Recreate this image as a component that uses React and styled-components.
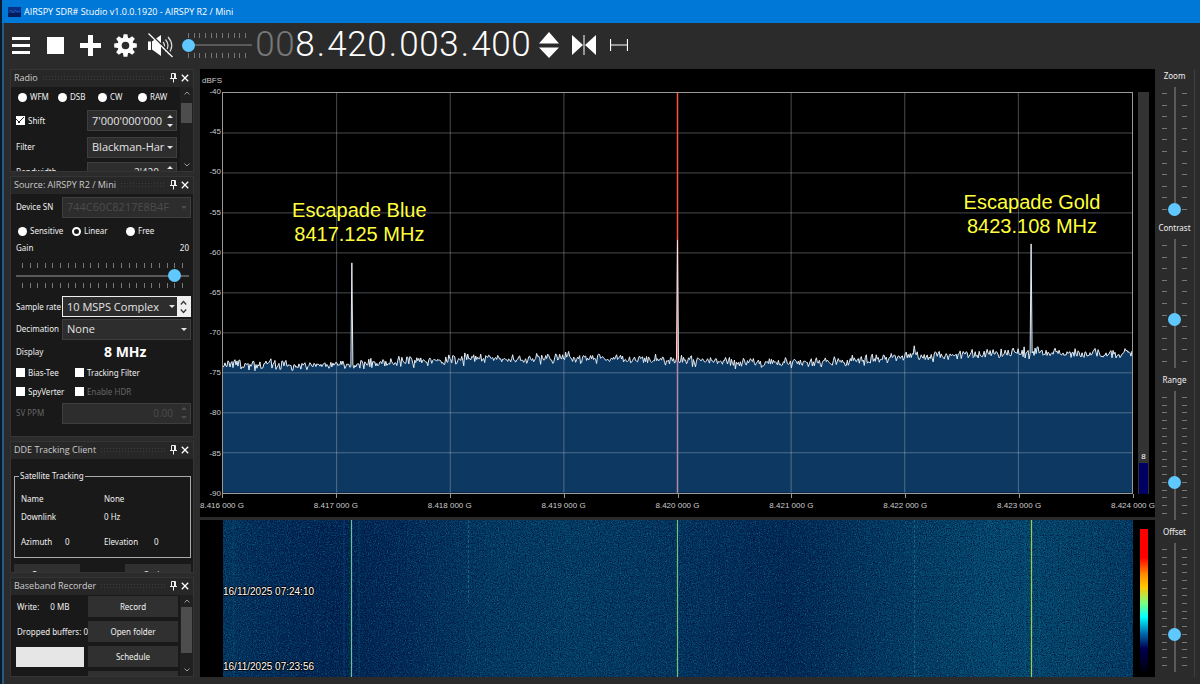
import React from 'react'
import styled, { createGlobalStyle, css } from 'styled-components'

const DIGITS = '008.420.003.400'.split('')
const LEVELS = [-40, -45, -50, -55, -60, -65, -70, -75, -80, -85, -90]
const FREQS = [
    '8.416 000 G', '8.417 000 G', '8.418 000 G', '8.419 000 G', '8.420 000 G',
    '8.421 000 G', '8.422 000 G', '8.423 000 G', '8.424 000 G',
]
const PLOT_W = 910
const PLOT_H = 400
// noise floor as [x, y] in plot units
const FLOOR = [
    [0, 271], [78, 273], [128, 272], [198, 268], [278, 265], [338, 265], [418, 267],
    [498, 269], [558, 270], [628, 268], [688, 263], [778, 260], [818, 260], [910, 262],
]
const PEAKS = { 129: 170, 455: 147, 809: 151, 692: 253, 802: 254, 816: 254 }

function random(seed) {
    let s = seed
    return () => {
        s = (s * 1103515245 + 12345) % 2147483648
        return s / 2147483648
    }
}

function floorAt(x) {
    const i = Math.max(1, FLOOR.findIndex(([fx]) => fx >= x))
    const [x0, y0] = FLOOR[i - 1]
    const [x1, y1] = FLOOR[i]
    return y0 + ((y1 - y0) * (x - x0)) / (x1 - x0)
}

function makeTrace() {
    const rnd = random(77)
    const points = []
    for (let x = 0; x <= PLOT_W; x += 1) {
        const noise = (rnd() + rnd() + rnd() - 1.5) * 5
        points.push(`${x},${(PEAKS[x] || floorAt(x) + noise).toFixed(1)}`)
    }
    return points.join(' ')
}
const TRACE = makeTrace()

function Ticks({ count, vertical }) {
    return (
        <TickRow $vertical={vertical} aria-hidden="true">
            {Array.from({ length: count }, (_, i) => <Tick key={i} $vertical={vertical} />)}
        </TickRow>
    )
}

function Slider({ label, count, vertical, ...rest }) {
    return (
        <SliderBox $vertical={vertical}>
            <Ticks count={count} vertical={vertical} />
            <Range type="range" aria-label={label} $vertical={vertical} {...rest} />
            <Ticks count={count} vertical={vertical} />
        </SliderBox>
    )
}

function Panel({ title, children }) {
    return (
        <PanelBox>
            <PanelHead>
                <h2>{title}</h2>
                <Grip />
                <HeadButton aria-label="Pin">
                    <svg width="7" height="10" viewBox="0 0 7 10">
                        <path d="M1.5 .5h4v5h-4zM0 5.5h7M3.5 5.5v4" fill="none" stroke="#eee" />
                        <path d="M4 1h1.5v4H4z" fill="#eee" />
                    </svg>
                </HeadButton>
                <HeadButton aria-label="Close">
                    <svg width="8" height="8" viewBox="0 0 8 8">
                        <path d="M.8.8l6.4 6.4M7.2.8L.8 7.2" stroke="#fff" strokeWidth="1.3" />
                    </svg>
                </HeadButton>
            </PanelHead>
            <PanelBody>{children}</PanelBody>
        </PanelBox>
    )
}

function Option({ type = 'checkbox', name, label, width, checked, disabled }) {
    return (
        <OptionLabel $width={width} $off={disabled}>
            <Mark type={type} name={name} defaultChecked={checked} disabled={disabled} />
            {label}
        </OptionLabel>
    )
}

function Combo({ id, value, raised, disabled }) {
    return (
        <Field $raised={raised} $off={disabled}>
            <select id={id} defaultValue={value} disabled={disabled}>
                <option>{value}</option>
            </select>
            <svg width="6" height="3" viewBox="0 0 6 3"><path d="M0 0h6L3 3z" fill="currentColor" /></svg>
            {raised && (
                <Stepper aria-label="Refresh">
                    <svg width="7" height="14" viewBox="0 0 7 14">
                        <path d="M.8 4.5l2.7-3 2.7 3M.8 9.5l2.7 3 2.7-3" fill="none" stroke="#333" strokeWidth="1.2" />
                    </svg>
                </Stepper>
            )}
        </Field>
    )
}

function Spin({ id, label, value, disabled }) {
    return (
        <Field $off={disabled}>
            <input id={id} aria-label={label} defaultValue={value} disabled={disabled} />
            <svg width="6" height="12" viewBox="0 0 6 12">
                <path d="M0 3h6L3 0zM0 9h6l-3 3z" fill="currentColor" />
            </svg>
        </Field>
    )
}

function ScrollBar({ top, size }) {
    return (
        <ScrollTrack aria-hidden="true">
            <svg width="6" height="4" viewBox="0 0 6 4"><path d="M.5 3.5L3 1l2.5 2.5" fill="none" stroke="#999" /></svg>
            <ScrollThumb style={{ marginTop: top, height: size }} />
            <svg width="6" height="4" viewBox="0 0 6 4"><path d="M.5.5L3 3 5.5.5" fill="none" stroke="#999" /></svg>
        </ScrollTrack>
    )
}

function TopBar() {
    return (
        <ToolBar>
            <Tool aria-label="Menu">
                <svg width="18" height="17" viewBox="0 0 18 17"><path d="M0 0h18v3H0zM0 7h18v3H0zM0 14h18v3H0z" fill="#fff" /></svg>
            </Tool>
            <Tool aria-label="Stop">
                <svg width="17" height="17" viewBox="0 0 17 17"><path d="M0 0h17v17H0z" fill="#fff" /></svg>
            </Tool>
            <Tool aria-label="Add">
                <svg width="21" height="21" viewBox="0 0 21 21"><path d="M8 0h5v8h8v5h-8v8H8v-8H0V8h8z" fill="#fff" /></svg>
            </Tool>
            <Tool aria-label="Settings">
                <svg width="23" height="23" viewBox="-11.5 -11.5 23 23">
                    {[0, 45, 90, 135].map((a) => (
                        <path key={a} d="M-2.8 -6L-1.9 -11.3H1.9L2.8 -6V6L1.9 11.3H-1.9L-2.8 6z" fill="#fff" transform={`rotate(${a})`} />
                    ))}
                    <circle r="8" fill="#fff" />
                    <circle r="3.8" fill="#2b2b2b" />
                </svg>
            </Tool>
            <Tool aria-label="Mute">
                <svg width="25" height="25" viewBox="0 0 25 25">
                    <path d="M0 8.5h3v8.5H0zM4 8.5L13 2v21l-9-6.5z" fill="#fff" />
                    <path d="M15 9q3 3.5 0 7M17.5 6.5q5 6 0 12M20 4q7.5 8.5 0 17" fill="none" stroke="#ddd" strokeWidth="1.2" />
                    <path d="M1 0l24 23" stroke="#2b2b2b" strokeWidth="2" />
                    <path d="M.5 .5L24.5 24" stroke="#fff" strokeWidth="1.2" />
                </svg>
            </Tool>
            <VolumeBox>
                <Slider label="Volume" count={11} min="0" max="100" defaultValue="0" />
            </VolumeBox>
            <Frequency aria-label="Frequency">
                {DIGITS.map((d, i) => <Digit key={i} $dot={d === '.'} $dim={i < 2}>{d}</Digit>)}
            </Frequency>
            <Tool aria-label="Tuning step">
                <svg width="20" height="26" viewBox="0 0 20 26"><path d="M0 11.5L10 0l10 11.5zM0 15.5L10 26l10-10.5z" fill="#fff" /></svg>
            </Tool>
            <Tool aria-label="Center">
                <svg width="24" height="22" viewBox="0 0 24 22">
                    <path d="M0 1l11 10L0 21zM24 1L13 11l11 10z" fill="#fff" />
                    <path d="M12 1v20" stroke="#ddd" strokeWidth="1.2" />
                </svg>
            </Tool>
            <Tool aria-label="Span">
                <svg width="18" height="12" viewBox="0 0 18 12"><path d="M.5 0v12M17.5 0v12M0 6h18" stroke="#fff" strokeWidth="1.2" /></svg>
            </Tool>
        </ToolBar>
    )
}

function RadioPanel() {
    return (
        <Panel title="Radio">
            <Scroller>
                <Row $h={20}>
                    {['WFM', 'DSB', 'CW', 'RAW'].map((m) => (
                        <Option key={m} type="radio" name="mode" label={m} width={40} />
                    ))}
                </Row>
                <FormRow $h={27}>
                    <Option label="Shift" checked />
                    <Spin label="Shift frequency" value="7'000'000'000" />
                </FormRow>
                <FormRow $h={26}>
                    <label htmlFor="filter">Filter</label>
                    <Combo id="filter" value="Blackman-Harris 4" />
                </FormRow>
                <FormRow $h={24}>
                    <label htmlFor="bandwidth">Bandwidth</label>
                    <RightText><Spin id="bandwidth" value="2'420" /></RightText>
                </FormRow>
            </Scroller>
            <ScrollBar top={8} size={20} />
        </Panel>
    )
}

function SourcePanel() {
    return (
        <Panel title="Source: AIRSPY R2 / Mini">
            <Stack>
                <SourceRow $h={26}>
                    <label htmlFor="serial">Device SN</label>
                    <Combo id="serial" value="744C60C8217E8B4F" disabled />
                </SourceRow>
                <Row $h={22}>
                    <Option type="radio" name="gain" label="Sensitive" width={54} />
                    <Option type="radio" name="gain" label="Linear" width={54} checked />
                    <Option type="radio" name="gain" label="Free" width={54} />
                </Row>
                <Spread>
                    <span>Gain</span>
                    <output>20</output>
                </Spread>
                <GainBox>
                    <Slider label="Gain" count={22} min="0" max="21" defaultValue="20" />
                </GainBox>
                <SourceRow $h={23}>
                    <label htmlFor="rate">Sample rate</label>
                    <Combo id="rate" value="10 MSPS Complex" raised />
                </SourceRow>
                <SourceRow $h={22}>
                    <label htmlFor="decimation">Decimation</label>
                    <Combo id="decimation" value="None" />
                </SourceRow>
                <FormRow $h={23}>
                    <span>Display</span>
                    <Big>8 MHz</Big>
                </FormRow>
                <Row $h={19}>
                    <Option label="Bias-Tee" width={59} />
                    <Option label="Tracking Filter" width={80} />
                </Row>
                <Row $h={19}>
                    <Option label="SpyVerter" width={59} />
                    <Option label="Enable HDR" width={80} disabled />
                </Row>
                <SourceRow $h={24} $off>
                    <label htmlFor="ppm">SV PPM</label>
                    <RightText><Spin id="ppm" value="0.00" disabled /></RightText>
                </SourceRow>
            </Stack>
        </Panel>
    )
}

function TrackingPanel() {
    return (
        <Panel title="DDE Tracking Client">
            <TrackingBody>
                <Group>
                    <legend>Satellite Tracking</legend>
                    <Pairs>
                        <dt>Name</dt><dd>None</dd>
                        <dt>Downlink</dt><dd>0 Hz</dd>
                    </Pairs>
                    <Angles>
                        <span>Azimuth</span><span>0</span>
                        <span>Elevation</span><span>0</span>
                    </Angles>
                </Group>
                <ButtonPair>
                    <PushButton>Connect</PushButton>
                    <PushButton>Options</PushButton>
                </ButtonPair>
            </TrackingBody>
        </Panel>
    )
}

function RecorderPanel() {
    return (
        <Panel title="Baseband Recorder">
            <Scroller>
                <RecorderGrid>
                    <Write><span>Write:</span><span>0 MB</span></Write>
                    <PushButton>Record</PushButton>
                    <Clip>Dropped buffers: 0</Clip>
                    <PushButton>Open folder</PushButton>
                    <Blank />
                    <PushButton>Schedule</PushButton>
                    <span />
                    <PushButton aria-label="Configure" />
                </RecorderGrid>
            </Scroller>
            <ScrollBar top={4} size={46} />
        </Panel>
    )
}

function Spectrum() {
    return (
        <SpectrumBox>
            <Unit>dBFS</Unit>
            <Scale>{LEVELS.map((l) => <span key={l}>{l}</span>)}</Scale>
            <Plot>
                <svg viewBox={`0 0 ${PLOT_W} ${PLOT_H}`} preserveAspectRatio="none">
                    <polygon points={`0,${PLOT_H} ${TRACE} ${PLOT_W},${PLOT_H}`} fill="#0c3862" />
                    {LEVELS.slice(1, -1).map((l, i) => (
                        <line key={l} x1="0" x2={PLOT_W} y1={(i + 1) * 40} y2={(i + 1) * 40} stroke="#c0c8d0" strokeOpacity=".38" />
                    ))}
                    {FREQS.slice(1, -1).map((f, i) => (
                        <line key={f} y1="0" y2={PLOT_H} x1={(i + 1) * PLOT_W / 8} x2={(i + 1) * PLOT_W / 8} stroke="#c0c8d0" strokeOpacity=".38" />
                    ))}
                    <line x1="455" x2="455" y1="0" y2="268" stroke="#ff5040" strokeWidth="1.5" />
                    <line x1="455" x2="455" y1="268" y2={PLOT_H} stroke="#b58aa8" strokeWidth="1.5" />
                    <polyline points={TRACE} fill="none" stroke="#e4ecf4" strokeWidth="1" />
                </svg>
                <Note $x={15} $y={26}>Escapade Blue<br />8417.125 MHz</Note>
                <Note $x={89} $y={24}>Escapade Gold<br />8423.108 MHz</Note>
            </Plot>
            <Meter><b>8</b><i /></Meter>
            <FreqAxis>
                {FREQS.map((f, i) => <span key={f} style={{ left: `${i * 12.5}%` }}>{f}</span>)}
            </FreqAxis>
        </SpectrumBox>
    )
}

function Waterfall() {
    return (
        <WaterfallBox>
            <Fall>
                <svg viewBox="0 0 910 157" preserveAspectRatio="none">
                    <defs>
                        <linearGradient id="heat">
                            <stop offset="0" stopColor="#043861" />
                            <stop offset=".04" stopColor="#032e5a" />
                            <stop offset=".13" stopColor="#022250" />
                            <stop offset=".2" stopColor="#032a57" />
                            <stop offset=".29" stopColor="#043b63" />
                            <stop offset=".38" stopColor="#043f66" />
                            <stop offset=".47" stopColor="#043961" />
                            <stop offset=".54" stopColor="#03305b" />
                            <stop offset=".62" stopColor="#022753" />
                            <stop offset=".68" stopColor="#03325b" />
                            <stop offset=".76" stopColor="#044066" />
                            <stop offset=".85" stopColor="#054c71" />
                            <stop offset=".92" stopColor="#05486d" />
                            <stop offset="1" stopColor="#043c64" />
                        </linearGradient>
                        <filter id="grain" x="0" y="0" width="100%" height="100%" colorInterpolationFilters="sRGB">
                            <feTurbulence type="fractalNoise" baseFrequency=".9" numOctaves="2" seed="4" />
                            <feColorMatrix values="0 0 0 0 .06  0 0 0 0 .48  0 0 0 0 .6  2.4 0 0 0 -1.08" />
                        </filter>
                        <filter id="shade" x="0" y="0" width="100%" height="100%" colorInterpolationFilters="sRGB">
                            <feTurbulence type="fractalNoise" baseFrequency=".85" numOctaves="2" seed="11" />
                            <feColorMatrix values="0 0 0 0 0  0 0 0 0 .04  0 0 0 0 .22  2.4 0 0 0 -1" />
                        </filter>
                    </defs>
                    <rect width="910" height="157" fill="url(#heat)" />
                    <rect width="910" height="157" filter="url(#grain)" opacity=".7" />
                    <rect width="910" height="157" filter="url(#shade)" opacity=".8" />
                    <path d="M10.5 0v157M121 0v157M136 0v157M802 0v157M816 0v157" stroke="#0a6a8c" strokeOpacity=".2" strokeWidth="2" />
                    <path d="M245.5 0v82M691.5 0v157" stroke="#2a8a9c" strokeOpacity=".5" strokeDasharray="3 2" />
                    <path d="M128.5 0v157" stroke="#6cc492" strokeWidth="1.2" />
                    <path d="M454.5 0v157" stroke="#74c07c" strokeWidth="1.2" />
                    <path d="M808.5 0v157" stroke="#a4cc4c" strokeWidth="1.2" />
                </svg>
                <Stamp $bottom={80}>16/11/2025 07:24:10</Stamp>
                <Stamp $bottom={5}>16/11/2025 07:23:56</Stamp>
            </Fall>
            <Palette />
        </WaterfallBox>
    )
}

function App() {
    return (
        <>
            <GlobalStyle />
            <Window>
                <TitleBar>
                    <svg width="13" height="10" viewBox="0 0 13 10">
                        <path d="M0 0h13v10H0z" fill="#0a2f86" />
                        <path d="M0 6h13v4H0z" fill="#071c5c" />
                        <path d="M1 5l2-2 2 3 2-3 2 2 3-1" fill="none" stroke="#1f52a8" />
                    </svg>
                    <h1>AIRSPY SDR# Studio v1.0.0.1920 - AIRSPY R2 / Mini</h1>
                </TitleBar>
                <TopBar />
                <Work>
                    <SideBar>
                        <RadioPanel />
                        <SourcePanel />
                        <TrackingPanel />
                        <RecorderPanel />
                    </SideBar>
                    <Display>
                        <Spectrum />
                        <Waterfall />
                    </Display>
                    <Controls>
                        <Control>
                            <span>Zoom</span>
                            <Slider vertical label="Zoom" count={11} min="0" max="100" defaultValue="0" />
                        </Control>
                        <Control>
                            <span>Contrast</span>
                            <Slider vertical label="Contrast" count={11} min="0" max="100" defaultValue="36" />
                        </Control>
                        <Control>
                            <span>Range</span>
                            <Slider vertical label="Range" count={16} min="0" max="100" defaultValue="27" />
                        </Control>
                        <Control>
                            <span>Offset</span>
                            <Slider vertical label="Offset" count={16} min="0" max="100" defaultValue="27" />
                        </Control>
                    </Controls>
                </Work>
            </Window>
        </>
    )
}

const GlobalStyle = createGlobalStyle`
    * {
        box-sizing: border-box;
    }
    body {
        margin: 0;
        background: #2b2b2b;
        color: #f0f0f0;
        font: 8px/12px "Noto Sans", "Open Sans", sans-serif;
    }
    h1, h2, dl, dd {
        margin: 0;
        font-size: inherit;
        font-weight: 400;
    }
    button, input, select {
        margin: 0;
        padding: 0;
        border: 0;
        border-radius: 0;
        color: inherit;
        font: inherit;
    }
    svg {
        display: block;
        flex: none;
    }
`

const Window = styled.div`
    display: flex;
    flex-direction: column;
    min-height: 100vh;
    border-left: 2px solid #0b1a2a;
    box-shadow: inset 2px 0 #265a80;
`

const TitleBar = styled.header`
    display: flex;
    align-items: center;
    gap: 3px;
    height: 23px;
    padding-left: 6px;
    background: #0078d7;
    color: #fff;
    font-family: "Open Sans", sans-serif;
    font-size: 9px;
`

const ToolBar = styled.div`
    display: flex;
    align-items: center;
    height: 46px;
    padding: 0 0 2px 1px;
`

const Tool = styled.button`
    display: flex;
    justify-content: center;
    width: 35px;
    background: none;
`

const VolumeBox = styled.div`
    width: 70px;
    margin-left: 4px;
`

const Frequency = styled.output`
    display: flex;
    padding-left: 3px;
    color: #fff;
    font: 300 35px/40px Roboto, sans-serif;
`

const Digit = styled.span`
    width: ${(props) => props.$dot ? 12 : 20}px;
    text-align: center;
    color: ${(props) => props.$dim ? '#777' : '#fff'};
`

const Work = styled.main`
    flex: 1;
    display: grid;
    grid-template-columns: 184px 1fr 40px;
    padding: 0 5px 7px 8px;
`

const SliderBox = styled.div`
    display: flex;
    flex-direction: ${(props) => props.$vertical ? 'row' : 'column'};
    align-items: stretch;
    justify-content: center;
    gap: 1px;
    min-height: 0;
    ${(props) => props.$vertical && 'flex: 1;'}
`

const TickRow = styled.div`
    display: flex;
    flex-direction: ${(props) => props.$vertical ? 'column' : 'row'};
    justify-content: space-between;
    padding: ${(props) => props.$vertical ? '6px 0' : '0 6px'};
`

const Tick = styled.i`
    width: ${(props) => props.$vertical ? 5 : 1}px;
    height: ${(props) => props.$vertical ? 1 : 5}px;
    background: #777;
`

const thumb = css`
    appearance: none;
    width: 13px;
    height: 13px;
    border: 0;
    border-radius: 50%;
    background: #5fc8ff;
`

const Range = styled.input`
    appearance: none;
    background: linear-gradient(#5a5a5a, #5a5a5a) center no-repeat;
    ${(props) => props.$vertical ? css`
        writing-mode: vertical-lr;
        direction: rtl;
        width: 13px;
        height: 100%;
        background-size: 2px 100%;
    ` : css`
        width: 100%;
        height: 13px;
        background-size: 100% 2px;
    `}
    &::-webkit-slider-thumb {
        ${thumb}
    }
`

const SideBar = styled.aside`
    display: grid;
    grid-template-rows: 103px 261px 132px 1fr;
    gap: 4px;
`

const PanelBox = styled.section`
    display: flex;
    flex-direction: column;
    min-height: 0;
    border: 1px solid #353535;
    background: #191919;
    overflow: hidden;
`

const PanelHead = styled.header`
    display: flex;
    align-items: center;
    gap: 4px;
    height: 17px;
    padding: 0 4px 2px 3px;
    background: #272727;
    color: #ccc;
    font-family: "Open Sans", sans-serif;
    font-size: 9px;
    white-space: nowrap;
`

const Grip = styled.span`
    flex: 1;
    height: 6px;
    background: radial-gradient(#3c3c3c 1px, transparent 1px) 0 0 / 3px 3px;
`

const HeadButton = styled.button`
    display: flex;
    background: none;
`

const PanelBody = styled.div`
    flex: 1;
    display: flex;
    min-height: 0;
    color: #f0f0f0;
`

const Scroller = styled.div`
    flex: 1;
    height: 0;
    min-width: 0;
    padding-left: 5px;
`

const Stack = styled.div`
    flex: 1;
    padding: 0 2px 0 5px;
`

const Row = styled.div`
    display: flex;
    align-items: center;
    height: ${(props) => props.$h}px;
`

const FormRow = styled.div`
    display: grid;
    grid-template-columns: 71px 90px;
    align-items: center;
    height: ${(props) => props.$h}px;
`

const SourceRow = styled(FormRow)`
    grid-template-columns: 46px 1fr;
    white-space: nowrap;
    color: ${(props) => props.$off ? '#666' : 'inherit'};
`

const Spread = styled.div`
    display: flex;
    justify-content: space-between;
    height: 21px;
    padding-right: 2px;
`

const GainBox = styled.div`
    padding: 0 2px 7px 0;
`

const OptionLabel = styled.label`
    display: flex;
    align-items: center;
    gap: 3px;
    width: ${(props) => props.$width ? `${props.$width}px` : 'auto'};
    white-space: nowrap;
    color: ${(props) => props.$off ? '#666' : 'inherit'};
`

const Mark = styled.input`
    appearance: none;
    flex: none;
    width: 9px;
    height: 9px;
    background: #fff;
    &[type='radio'] {
        margin: 0 0 0 2px;
        border-radius: 50%;
    }
    &[type='radio']:checked {
        border: 2px solid #fff;
        background: #191919;
    }
    &[type='checkbox']:checked {
        background: linear-gradient(45deg, transparent 30%, #222 30% 42%, transparent 42%) 0 2px / 5px 5px no-repeat,
            linear-gradient(135deg, transparent 42%, #222 42% 58%, transparent 58%) 2px 1px / 6px 6px no-repeat, #fff;
    }
`

const Field = styled.div`
    display: flex;
    align-items: center;
    gap: 2px;
    width: 100%;
    height: 21px;
    padding: 0 3px 0 4px;
    border: 1px solid ${(props) => props.$raised ? '#eee' : '#3e3e3e'};
    background: #2d2d2d;
    color: ${(props) => props.$off ? '#4c4c4c' : '#e4e4e4'};
    font-family: "Open Sans", sans-serif;
    font-size: 11px;
    ${(props) => props.$raised && 'padding-right: 0;'}
    input, select {
        appearance: none;
        flex: 1;
        width: 0;
        min-width: 0;
        height: 100%;
        background: none;
        overflow: hidden;
        opacity: 1;
    }
`

const RightText = styled.div`
    input {
        text-align: right;
        padding-right: 6px;
        font-size: 10px;
    }
`

const Stepper = styled.button`
    display: flex;
    align-items: center;
    justify-content: center;
    width: 13px;
    height: 100%;
    background: #eee;
`

const Big = styled.output`
    padding-left: 17px;
    color: #fff;
    font-size: 14px;
    font-weight: 700;
    line-height: 20px;
`

const ScrollTrack = styled.div`
    display: flex;
    flex-direction: column;
    align-items: center;
    width: 13px;
    padding: 4px 0;
    background: #202020;
    svg:last-child {
        margin-top: auto;
    }
`

const ScrollThumb = styled.div`
    width: 11px;
    background: #4d4d4d;
`

const TrackingBody = styled.div`
    flex: 1;
    height: 0;
    padding: 11px 2px 0 3px;
`

const Group = styled.fieldset`
    height: 88px;
    min-width: 0;
    margin: 0;
    padding: 11px 6px 0;
    border: 1px solid #aaa;
    legend {
        margin-left: -2px;
        padding: 0 1px;
    }
`

const Pairs = styled.dl`
    display: grid;
    grid-template-columns: 83px 1fr;
    row-gap: 6px;
`

const Angles = styled.div`
    display: grid;
    grid-template-columns: 44px 39px 50px 1fr;
    padding-top: 13px;
`

const ButtonPair = styled.div`
    display: flex;
    justify-content: space-between;
    padding-top: 6px;
    button {
        width: 66px;
    }
`

const PushButton = styled.button`
    height: 21px;
    background: #303030;
    color: #f0f0f0;
`

const RecorderGrid = styled.div`
    display: grid;
    grid-template-columns: 68px 90px;
    gap: 4px;
    align-items: center;
    padding-top: 1px;
`

const Write = styled.div`
    display: flex;
    gap: 11px;
    padding-left: 1px;
`

const Clip = styled.span`
    padding-left: 1px;
    margin-right: -4px;
    white-space: nowrap;
    overflow: hidden;
`

const Blank = styled.div`
    height: 20px;
    background: #e6e6e6;
`

const Display = styled.div`
    display: grid;
    grid-template-rows: 447fr 157fr;
    gap: 3px;
    margin-left: 6px;
    min-width: 0;
`

const SpectrumBox = styled.div`
    display: grid;
    grid-template-columns: 22px 1fr 22px;
    grid-template-rows: 23px 1fr 23px;
    background: #000;
    color: #ccc;
    font: 8px/12px "Liberation Sans", Arial, sans-serif;
    overflow: hidden;
`

const Unit = styled.span`
    grid-column: 1 / -1;
    padding: 6px 0 0 2px;
`

const Scale = styled.div`
    display: flex;
    flex-direction: column;
    justify-content: space-between;
    margin: -6px 0;
    padding-right: 1px;
    text-align: right;
`

const Plot = styled.div`
    position: relative;
    border: 1px solid #999;
    > svg {
        position: absolute;
        width: 100%;
        height: 100%;
    }
`

const Note = styled.p`
    position: absolute;
    left: ${(props) => props.$x}%;
    top: ${(props) => props.$y}%;
    margin: 0;
    padding-top: 1px;
    transform: translateX(-50%);
    color: #ffff3c;
    font-size: 20px;
    line-height: 24px;
    text-align: center;
    white-space: nowrap;
`

const Meter = styled.div`
    display: flex;
    flex-direction: column;
    justify-content: flex-end;
    width: 11px;
    margin-left: 5px;
    background: #333;
    color: #fff;
    text-align: center;
    b {
        font-weight: 400;
    }
    i {
        height: 31px;
        margin: 0 1px;
        background: #000064;
    }
`

const FreqAxis = styled.div`
    position: relative;
    grid-column: 2;
    span {
        position: absolute;
        padding-top: 6px;
        transform: translateX(-50%);
        white-space: nowrap;
    }
    span::before {
        content: '';
        position: absolute;
        top: 0;
        left: 50%;
        width: 1px;
        height: 4px;
        background: #999;
    }
`

const WaterfallBox = styled.div`
    display: grid;
    grid-template-columns: 1fr 22px;
    padding-left: 23px;
    background: #000;
`

const Fall = styled.div`
    position: relative;
    svg {
        position: absolute;
        width: 100%;
        height: 100%;
    }
`

const Stamp = styled.span`
    position: absolute;
    left: 0;
    bottom: ${(props) => props.$bottom}px;
    color: #fff;
    font: 10px/10px "Liberation Sans", Arial, sans-serif;
    text-shadow: 1px 0 #000, -1px 0 #000, 0 1px #000, 0 -1px #000;
`

const Palette = styled.div`
    width: 8px;
    margin: 9px 0 6px 7px;
    background: linear-gradient(#f00 20%, #ff8c00 32%, #ffc800 41%, #7fff7f 52%, #00ffff 62%, #0070b0 73%, #000050 84%, #000010);
`

const Controls = styled.aside`
    display: flex;
    flex-direction: column;
    min-height: 0;
    border-right: 1px solid #3a3f44;
`

const Control = styled.div`
    flex: 1 1 0;
    display: flex;
    flex-direction: column;
    gap: 5px;
    min-height: 0;
    padding-top: 1px;
    padding-bottom: 5px;
    text-align: center;
`

export default App
